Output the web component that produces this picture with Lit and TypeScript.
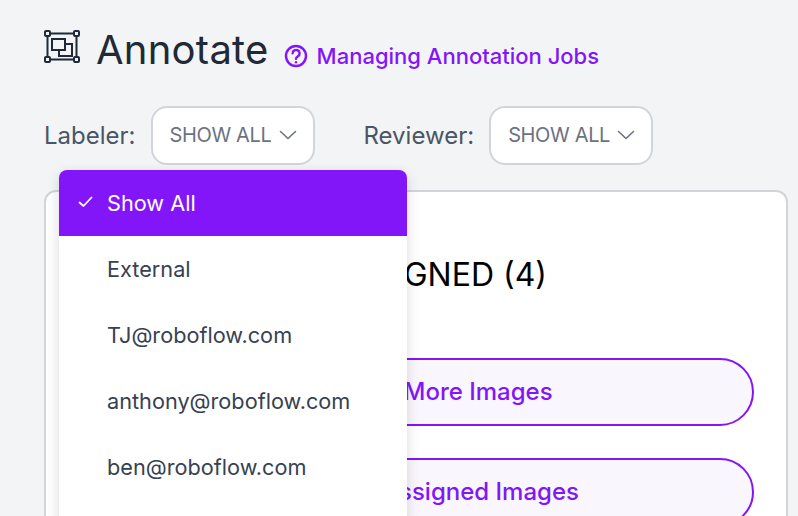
import { LitElement, css, html } from 'lit';
import { customElement } from 'lit/decorators.js';

const chevron = html`<svg class="chevron" viewBox="0 0 18 10" fill="none" stroke="currentColor" stroke-width="1.6" stroke-linecap="round" stroke-linejoin="round"><path d="M1.5 1.500 9 8.500l7.500-7"/></svg>`;

@customElement('app-root')
export class AppRoot extends LitElement {
  static styles = css`
    :host {
      display: block;
      position: relative;
      width: 798px;
      height: 516px;
      overflow: hidden;
      background: #f3f4f6;
      font-family: Inter, 'Liberation Sans', sans-serif;
      box-sizing: border-box;
      padding: 26px 10px 0 44px;
    }

    .title-row {
      display: flex;
      align-items: center;
      height: 48px;
    }

    .title-icon {
      width: 36px;
      height: 36px;
      color: #1f2937;
      margin-right: 16px;
      margin-top: -6px;
    }

    h1 {
      margin: 0;
      font-size: 40px;
      line-height: 48px;
      font-weight: 400;
      letter-spacing: 0.25px;
      color: #1f2937;
    }

    .help {
      display: flex;
      align-items: center;
      gap: 9px;
      margin-left: 15px;
      margin-top: 12px;
      color: #8315f9;
      font-size: 22px;
      font-weight: 500;
    }

    .help svg {
      width: 24px;
      height: 24px;
    }

    .filters {
      display: flex;
      align-items: center;
      margin-top: 31px;
      height: 60px;
      color: #4b5563;
      font-size: 24px;
    }

    .select {
      display: flex;
      align-items: center;
      justify-content: space-between;
      box-sizing: border-box;
      width: 164px;
      height: 59px;
      margin: 0 49px 0 15px;
      padding: 0 16px 0 17px;
      background: #fff;
      border: 2px solid #d1d5db;
      border-radius: 16px;
      color: #6b7280;
      font-size: 20px;
      letter-spacing: -0.35px;
    }

    .chevron {
      width: 18px;
      height: 10px;
    }

    .card {
      display: flex;
      flex-direction: column;
      align-items: flex-end;
      box-sizing: border-box;
      height: 340px;
      margin-top: 25px;
      padding: 63px 32px 0 0;
      background: #fff;
      border: 2px solid #d1d5db;
      border-bottom: 0;
      border-radius: 12px 12px 0 0;
    }

    .card-body {
      display: flex;
      flex-direction: column;
      width: 474px;
    }

    h2 {
      margin: 0 0 63px 4px;
      font-size: 32px;
      line-height: 40px;
      font-weight: 400;
      color: #000;
    }

    .action {
      display: flex;
      align-items: center;
      box-sizing: border-box;
      height: 68px;
      margin-bottom: 32px;
      padding: 0 0 2px 37px;
      background: #f9f6fe;
      border: 2px solid #8315f9;
      border-radius: 34px;
      color: #8315f9;
      font-size: 24px;
      font-weight: 500;
    }

    .menu {
      position: absolute;
      left: 59px;
      top: 170px;
      width: 348px;
      height: 400px;
      background: #fff;
      border-radius: 8px 8px 0 0;
      box-shadow: 0 4px 14px rgba(0, 0, 0, 0.14);
      color: #374151;
      font-size: 21.700px;
    }

    .item {
      display: flex;
      align-items: center;
      height: 66px;
      padding-left: 48px;
    }

    .item.active {
      position: relative;
      background: #8315f9;
      color: #fff;
      border-radius: 8px 8px 0 0;
    }

    .check {
      position: absolute;
      left: 19px;
      top: 26px;
      width: 15px;
      height: 12px;
    }
  `;

  render() {
    return html`
      <div class="title-row">
        <svg class="title-icon" viewBox="0 0 36 36" fill="none" stroke="currentColor" stroke-width="2">
          <rect x="1" y="2" width="5" height="5" rx="1" />
          <rect x="30" y="2" width="5" height="5" rx="1" />
          <rect x="1" y="28" width="5" height="5" rx="1" />
          <rect x="30" y="28" width="5" height="5" rx="1" />
          <path d="M6 4.500h24M6 30.500h24M3.500 7v21M32.500 7v21" />
          <path d="M8 10h13v11H8z" />
          <path d="M21 15h7v12H15v-6" />
        </svg>
        <h1>Annotate</h1>
        <div class="help">
          <svg viewBox="0 0 24 24" fill="none" stroke="currentColor" stroke-width="2.400" stroke-linecap="round" stroke-linejoin="round">
            <circle cx="12" cy="12" r="10" />
            <path d="M8.600 9.200a3.500 3.400 0 1 1 5.400 3c-1.300.8-2 1.400-2 2.600" />
            <path d="M12 18.200v.1" />
          </svg>
          <span>Managing Annotation Jobs</span>
        </div>
      </div>
      <div class="filters">
        <span>Labeler:</span>
        <div class="select"><span>SHOW ALL</span>${chevron}</div>
        <span>Reviewer:</span>
        <div class="select"><span>SHOW ALL</span>${chevron}</div>
      </div>
      <div class="card">
        <div class="card-body">
          <h2>UNASSIGNED (4)</h2>
          <div class="action">Assign More Images</div>
          <div class="action">View Assigned Images</div>
        </div>
      </div>
      <div class="menu">
        <div class="item active">
          <svg class="check" viewBox="0 0 15 12" fill="none" stroke="currentColor" stroke-width="1.800" stroke-linecap="round" stroke-linejoin="round"><path d="M1.500 6.500 5.500 10 13.500 1.500"/></svg>
          Show All
        </div>
        <div class="item">External</div>
        <div class="item">TJ@roboflow.com</div>
        <div class="item">anthony@roboflow.com</div>
        <div class="item">ben@roboflow.com</div>
      </div>
    `;
  }
}
